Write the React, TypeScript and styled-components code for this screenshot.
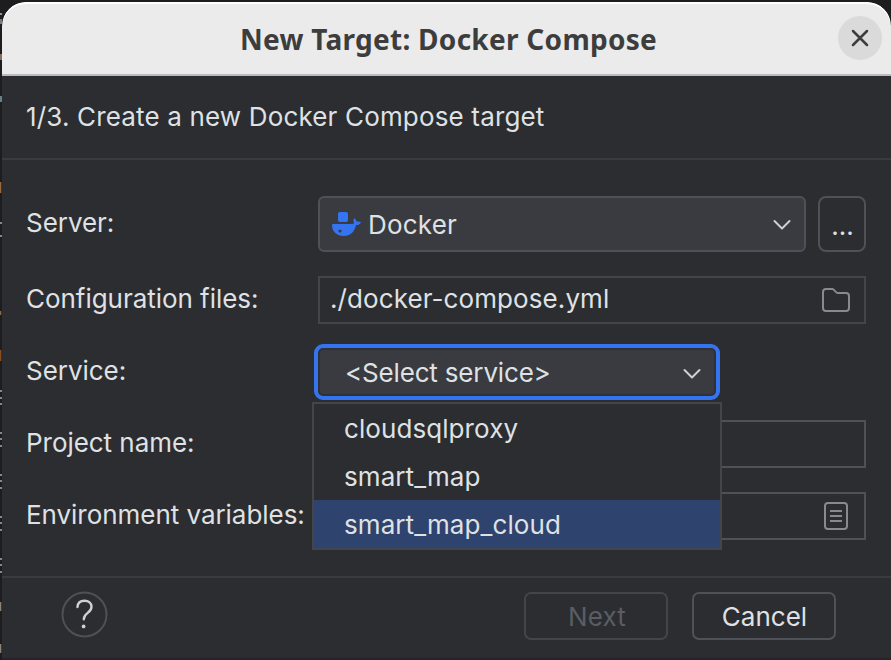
import React from 'react';
import styled, { createGlobalStyle, css } from 'styled-components';

const GlobalStyle = createGlobalStyle`
  *, *::before, *::after { box-sizing: border-box; }
  html, body { margin: 0; padding: 0; background: #1e1f22; overflow: hidden; }
  body { font-family: Inter, "Liberation Sans", sans-serif; }
  button, input { font: inherit; color: inherit; }
`;

const Desktop = styled.div`
  display: grid;
  grid-template-columns: 2px 889px;
  width: 891px;
  height: 660px;
  padding-top: 2px;
  overflow: hidden;
  background: #1d1d20;
`;

const EditorEdge = styled.svg`
  display: block;
  width: 2px;
  height: 658px;
`;

const Dialog = styled.section`
  display: flex;
  flex-direction: column;
  width: 889px;
  height: 658px;
  overflow: hidden;
  border-radius: 24px 24px 0 0;
  background: #2b2d30;
  border-bottom: 2px solid #252328;
  color: #dfe1e5;
  font-size: 26px;
  line-height: 32px;
`;

const TitleBar = styled.header`
  display: grid;
  grid-template-columns: 1fr 44px;
  align-items: center;
  flex: none;
  height: 74px;
  padding-right: 9px;
  background: #ebebeb;
  border-bottom: 2px solid #b9bcba;
  box-shadow: inset 0 2px #fff;
  border-radius: 24px 24px 0 0;
`;

const Title = styled.h1`
  margin: 0;
  padding: 1px 0 0 57px;
  text-align: center;
  white-space: nowrap;
  color: #3d3d3d;
  font: 700 28px/36px "Noto Sans", sans-serif;
  letter-spacing: 0.28px;
`;

const CloseButton = styled.button`
  display: grid;
  place-items: center;
  width: 44px;
  height: 44px;
  padding: 0;
  border: 0;
  border-radius: 50%;
  background: #dadada;
`;

const StepHeading = styled.div`
  display: flex;
  align-items: center;
  flex: none;
  height: 84px;
  padding: 0 0 1px 24px;
  border-bottom: 2px solid #393b40;
  white-space: nowrap;
  letter-spacing: 0.16px;
`;

const Form = styled.main`
  display: flex;
  flex-direction: column;
  gap: 24px;
  flex: none;
  height: 416px;
  padding: 36px 25px 0 24px;
`;

const Row = styled.div<{ $tall?: boolean }>`
  display: grid;
  grid-template-columns: 292px 548px;
  align-items: center;
  flex: none;
  height: ${(p) => (p.$tall ? 56 : 48)}px;
`;

const Label = styled.label`
  white-space: nowrap;
  padding-bottom: 2px;
  letter-spacing: -0.04px;
`;

const Controls = styled.div`
  display: flex;
  gap: 12px;
  height: 100%;
`;

const comboBase = css`
  display: flex;
  align-items: center;
  justify-content: space-between;
  text-align: left;
  background: #393b40;
  white-space: nowrap;
`;

const ServerCombo = styled.button`
  ${comboBase}
  width: 488px;
  height: 56px;
  padding: 2px 12px 0;
  border: 2px solid #4e5157;
  border-radius: 6px;
  letter-spacing: 0.2px;
`;

const ComboValue = styled.span`
  display: flex;
  align-items: center;
  gap: 6px;
`;

const MoreButton = styled.button`
  width: 48px;
  height: 56px;
  padding: 3px 0 0 1px;
  border: 2px solid #4e5157;
  border-radius: 8px;
  background: transparent;
`;

const Field = styled.div<{ $muted?: boolean; $inset?: number }>`
  display: flex;
  align-items: center;
  justify-content: space-between;
  width: 548px;
  height: 48px;
  padding: 0 ${(p) => p.$inset ?? 14}px 2px 10px;
  border: 2px solid ${(p) => (p.$muted ? '#43454a' : '#4e5157')};
  white-space: nowrap;
  letter-spacing: 0.09px;
`;

const FieldIcon = styled.span`
  display: flex;
  margin: 2px 0 0 auto;
`;

const ServiceAnchor = styled.div`
  position: relative;
  width: 398px;
  height: 48px;
`;

const ServiceCombo = styled.button`
  ${comboBase}
  width: 398px;
  height: 48px;
  padding: 2px 12px 0 25px;
  border: 2px solid #2f3136;
  border-radius: 5px;
  outline: 4px solid #3574f0;
  letter-spacing: -0.17px;
`;

const ServiceChevron = styled.span`
  display: flex;
  padding-top: 2px;
`;

const Menu = styled.ul`
  position: absolute;
  z-index: 2;
  top: 54px;
  left: -6px;
  width: 410px;
  margin: 0;
  padding: 0;
  list-style: none;
  background: #2b2d30;
  border: 2px solid #43454a;
`;

const MenuItem = styled.li<{ $selected?: boolean }>`
  height: 48px;
  padding: 1px 0 0 30px;
  line-height: 48px;
  letter-spacing: 0.08px;
  background: ${(p) => (p.$selected ? '#2e436e' : 'transparent')};
`;

const Footer = styled.footer`
  display: flex;
  align-items: center;
  justify-content: space-between;
  flex: none;
  height: 80px;
  padding: 0 55px 2px 59px;
  border-top: 2px solid #393b40;
`;

const HelpButton = styled.button`
  display: block;
  margin-top: -2px;
  padding: 0;
  border: 0;
  background: transparent;
`;

const Actions = styled.div`
  display: flex;
  gap: 24px;
`;

const ActionButton = styled.button`
  width: 144px;
  height: 48px;
  padding: 1px 0 0 1px;
  border: 2px solid #4e5157;
  border-radius: 7px;
  background: transparent;
  &:disabled {
    border-color: #43454a;
    color: #5a5d63;
    padding-left: 2px;
    letter-spacing: 0.2px;
  }
`;

const Block = styled.svg`
  display: block;
`;

const Chevron = () => (
  <Block width="20" height="12" viewBox="0 0 20 12" fill="none">
    <path d="M2.5 2 10 9.5 17.5 2" stroke="#ced0d6" strokeWidth="2" strokeLinecap="round" strokeLinejoin="round" />
  </Block>
);

const DockerIcon = () => (
  <Block width="30" height="26" viewBox="0 0 30 26">
    <rect x="6" y="0" width="10" height="10" rx="2" fill="#3574f0" />
    <path
      fill="#3574f0"
      fillRule="evenodd"
      d="M1.2 12H20c1 0 1.9-.5 1.9-1.3 0-.8-.5-1.3-.5-2.300 0-1 .5-1.800 1.200-2.100 1 .8 1.700 1.900 2 3.300 1.500-.4 3-.1 4.400.6-.8 1.900-2.500 2.900-5 2.900C22.600 20 18.500 24 11.800 24 5 24 0 19.800 0 13.200 0 12.500.5 12 1.200 12ZM8 17.400a1.600 1.600 0 1 0 0 3.200 1.600 1.600 0 0 0 0-3.200Z"
    />
  </Block>
);

const FolderIcon = () => (
  <Block width="28" height="24" viewBox="0 0 28 24" fill="none">
    <path
      d="M1 4a3 3 0 0 1 3-3h6.2a2 2 0 0 1 1.4.6l2.8 2.8a2 2 0 0 0 1.4.6H24a3 3 0 0 1 3 3v12a3 3 0 0 1-3 3H4a3 3 0 0 1-3-3Z"
      stroke="#868a91"
      strokeWidth="2"
    />
  </Block>
);

const ListIcon = () => (
  <Block width="24" height="28" viewBox="0 0 24 28" fill="none" stroke="#868a91" strokeWidth="2">
    <rect x="1" y="1" width="22" height="26" rx="3" />
    <path d="M6 9h12M6 14h12M6 19h12" />
  </Block>
);

const HelpIcon = () => (
  <Block width="48" height="48" viewBox="0 0 48 48" fill="none">
    <circle cx="23.5" cy="23.5" r="22" stroke="#4e5157" strokeWidth="2" />
    <path
      d="M16.5 16c.3-3.9 3-6.2 7-6.2 4.2 0 7 2.3 7 5.9 0 2.8-1.3 4.3-3.8 6.2-2.9 2.1-3.9 3.4-3.9 6.3"
      stroke="#ced0d6"
      strokeWidth="2.4"
      strokeLinecap="round"
    />
    <circle cx="22.6" cy="35.4" r="1.9" fill="#ced0d6" />
  </Block>
);

const CloseIcon = () => (
  <Block width="18" height="18" viewBox="0 0 18 18">
    <path d="m2 2 14 14M16 2 2 16" stroke="#3d3d3d" strokeWidth="2.5" strokeLinecap="round" />
  </Block>
);

const grayMarks = [220, 233, 388, 395, 401, 430, 436, 443, 472, 478, 485, 514, 520, 527, 556, 562, 569];
const amberMarks = [
  { y: 180, h: 11, c: '#9a6a3c' },
  { y: 309, h: 4, c: '#8b6848' },
  { y: 348, h: 11, c: '#8a4f1f' },
  { y: 600, h: 9, c: '#8e8377' },
  { y: 642, h: 9, c: '#8e8377' },
];

const EditorGlyphs = () => (
  <EditorEdge viewBox="0 0 2 658">
    <rect x="0" y="11" width="2" height="2" fill="#8f949b" />
    <rect x="0" y="17" width="2" height="5" fill="#777b81" />
    <rect x="0" y="52" width="2" height="6" fill="#8a6c55" />
    <rect x="0" y="94" width="2" height="6" fill="#66808a" />
    {grayMarks.map((y) => (
      <rect key={y} x="0" y={y} width="2" height="2" fill="#85878b" />
    ))}
    {amberMarks.map((m) => (
      <rect key={m.y} x="0" y={m.y} width="1.3" height={m.h} fill={m.c} />
    ))}
  </EditorEdge>
);

const services = ['cloudsqlproxy', 'smart_map', 'smart_map_cloud'];

export default function App() {
  return (
    <>
      <GlobalStyle />
      <Desktop>
        <EditorGlyphs />
        <Dialog>
          <TitleBar>
            <Title>New Target: Docker Compose</Title>
            <CloseButton aria-label="Close">
              <CloseIcon />
            </CloseButton>
          </TitleBar>
          <StepHeading>1/3. Create a new Docker Compose target</StepHeading>
          <Form>
            <Row $tall>
              <Label>Server:</Label>
              <Controls>
                <ServerCombo>
                  <ComboValue>
                    <DockerIcon />
                    Docker
                  </ComboValue>
                  <Chevron />
                </ServerCombo>
                <MoreButton>...</MoreButton>
              </Controls>
            </Row>
            <Row>
              <Label>Configuration files:</Label>
              <Field $muted>
                ./docker-compose.yml
                <FieldIcon>
                  <FolderIcon />
                </FieldIcon>
              </Field>
            </Row>
            <Row>
              <Label>Service:</Label>
              <ServiceAnchor>
                <ServiceCombo>
                  &lt;Select service&gt;
                  <ServiceChevron>
                    <Chevron />
                  </ServiceChevron>
                </ServiceCombo>
                <Menu>
                  {services.map((name) => (
                    <MenuItem key={name} $selected={name === 'smart_map_cloud'}>
                      {name}
                    </MenuItem>
                  ))}
                </Menu>
              </ServiceAnchor>
            </Row>
            <Row>
              <Label>Project name:</Label>
              <Field />
            </Row>
            <Row>
              <Label>Environment variables:</Label>
              <Field $inset={16}>
                <FieldIcon>
                  <ListIcon />
                </FieldIcon>
              </Field>
            </Row>
          </Form>
          <Footer>
            <HelpButton aria-label="Help">
              <HelpIcon />
            </HelpButton>
            <Actions>
              <ActionButton disabled>Next</ActionButton>
              <ActionButton>Cancel</ActionButton>
            </Actions>
          </Footer>
        </Dialog>
      </Desktop>
    </>
  );
}
